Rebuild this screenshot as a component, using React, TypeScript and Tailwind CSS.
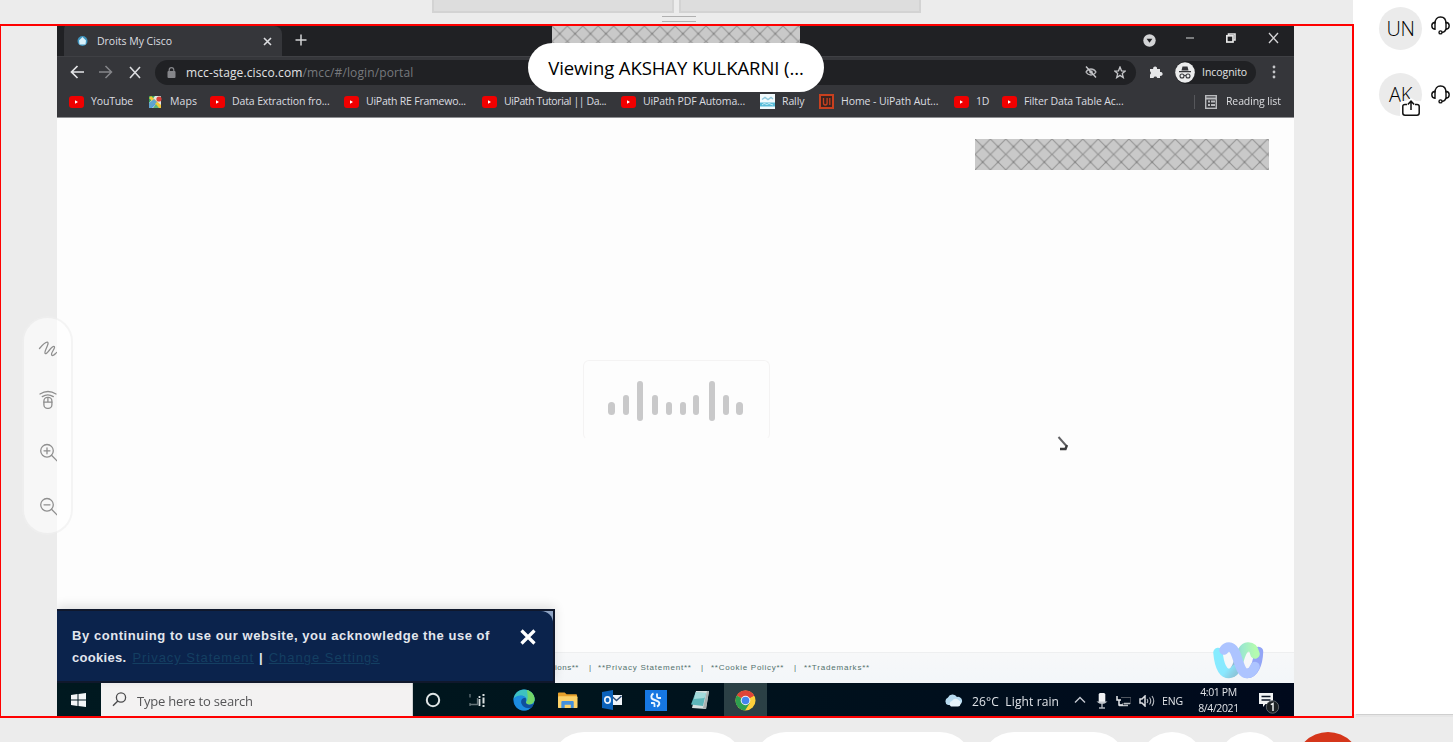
import React from "react";

const FONT = "font-['Open_Sans','Noto_Sans',sans-serif]";

function YouTubeIcon() {
  return (
    <svg className="h-3 w-[15px] shrink-0" viewBox="0 0 15 12">
      <rect width="15" height="12" rx="3" fill="#f00000" />
      <path d="M6 4.200 9 6 6 7.800z" fill="#fff" />
    </svg>
  );
}

function MapsIcon() {
  return (
    <svg className="h-3 w-[15px] shrink-0" viewBox="0 0 15 12">
      <rect x="1" width="12" height="12" rx="1" fill="#dfe6e4" />
      <path d="M1 0h6L1 7z" fill="#34a058" />
      <path d="M1 12V9l5-5 3 3-5 5z" fill="#4a8ff0" />
      <path d="M1 2l2-2 10 9v3h-2z" fill="#f4c93a" />
      <path d="M1 7l5-4 3 3-6 6H1z" fill="#5fa3d0" />
      <path d="M8 8l-3 4h6z" fill="#5fb277" />
      <circle cx="11" cy="3" r="2.6" fill="#d9403a" />
    </svg>
  );
}

function RallyIcon() {
  return (
    <svg className="h-[15px] w-[15px] shrink-0" viewBox="0 0 15 15">
      <rect width="15" height="15" fill="#f2fafc" />
      <path d="M2 5.500l3-2 3 2 3-2 2 1.500" stroke="#8fc9de" strokeWidth="1.500" fill="none" />
      <path d="M0 8.500h15v4H0z" fill="#58bcd8" />
      <path d="M2 11l2-1.500 3 1 2-1 4 1.500" stroke="#c8ecf5" fill="none" />
    </svg>
  );
}

function UiPathIcon() {
  return (
    <svg className="h-[15px] w-[15px] shrink-0" viewBox="0 0 15 15">
      <rect x="1" y="1" width="13" height="13" fill="#3a2420" stroke="#c8401f" strokeWidth="2" />
      <path d="M4.500 4v5q0 2 1.800 2t1.800-2V4M10.800 4v7" stroke="#c8401f" strokeWidth="1.300" fill="none" />
    </svg>
  );
}

const bookmarks = [
  { icon: "yt", label: "YouTube", slot: "w-[79px]", text: "tracking-[-0.15px]" },
  { icon: "maps", label: "Maps", slot: "w-[62px]", text: "tracking-[0.1px]" },
  { icon: "yt", label: "Data Extraction fro...", slot: "w-[134px]", text: "tracking-[-0.12px]" },
  { icon: "yt", label: "UiPath RE Framewo...", slot: "w-[138px]", text: "tracking-[-0.22px]" },
  { icon: "yt", label: "UiPath Tutorial || Da...", slot: "w-[139px]", text: "tracking-[-0.4px]" },
  { icon: "yt", label: "UiPath PDF Automa...", slot: "w-[139px]", text: "tracking-[-0.12px]" },
  { icon: "rally", label: "Rally", slot: "w-[59px]", text: "tracking-[-0.1px]" },
  { icon: "uipath", label: "Home - UiPath Aut...", slot: "w-[135px]", text: "tracking-[-0.08px]" },
  { icon: "yt", label: "1D", slot: "w-[48px]", text: "tracking-[-0.3px]" },
  { icon: "yt", label: "Filter Data Table Ac...", slot: "w-[192px]", text: "tracking-[-0.12px]" },
];

function BookmarkIcon({ kind }: { kind: string }) {
  if (kind === "maps") return <MapsIcon />;
  if (kind === "rally") return <RallyIcon />;
  if (kind === "uipath") return <UiPathIcon />;
  return <YouTubeIcon />;
}

function Hatch({ id, className }: { id: string; className: string }) {
  return (
    <svg className={className}>
      <defs>
        <pattern id={id} width="15.400" height="15.400" patternUnits="userSpaceOnUse">
          <rect width="15.400" height="15.400" fill="#c9c9c9" />
          <path d="M0 0 15.400 15.400M15.400 0 0 15.400" stroke="#959595" strokeWidth="1.150" />
          <circle cx="7.700" cy="7.700" r="1.200" fill="#8a8a8a" />
        </pattern>
      </defs>
      <rect width="100%" height="100%" fill={`url(#${id})`} />
    </svg>
  );
}

function TabStrip() {
  return (
    <div className="flex h-[30px] bg-[#202124]">
      <div className="flex h-[30px] w-[225px] items-center rounded-t-lg border-l-[7px] border-[#202124] bg-[#35363a] pl-[12px]">
        <svg className="h-3 w-3" viewBox="0 0 12 12">
          <circle cx="6.500" cy="6" r="5" fill="#3e93bd" />
          <path d="M3 5.500 6.500 2 10 5.500 9.500 9.500h-6z" fill="#d9f1fb" />
        </svg>
        <span className="ml-[9px] text-[10.5px] leading-none tracking-[-0.02px] whitespace-nowrap text-[#dedfe1]">
          Droits My Cisco
        </span>
        <svg className="mr-[10px] ml-auto h-[9px] w-[9px]" viewBox="0 0 9 9">
          <path d="M1 1l7 7M8 1 1 8" stroke="#dcdde0" strokeWidth="1.600" />
        </svg>
      </div>
      <svg className="mt-[8px] ml-[13px] h-3 w-3" viewBox="0 0 12 12">
        <path d="M6 .500v11M.500 6h11" stroke="#d2d3d5" strokeWidth="1.500" />
      </svg>
      <Hatch id="hatch-top" className="ml-[245px] h-[30px] w-[248px]" />
      <svg className="mt-2 ml-[343px] h-[13px] w-[13px]" viewBox="0 0 13 13">
        <circle cx="6.500" cy="6.500" r="6.200" fill="#d3d4d6" />
        <path d="M3.600 4.800h5.800L6.500 8.800z" fill="#202124" />
      </svg>
      <svg className="mt-[7px] ml-[29px] h-3 w-2.5" viewBox="0 0 10 12">
        <path d="M1 5h8" stroke="#b8b9bb" strokeWidth="1.200" />
      </svg>
      <svg className="mt-[7px] ml-[31px] h-2.5 w-2.5" viewBox="0 0 10 10">
        <path d="M2.500 2.500V1H9v6H7.500" stroke="#e6e6e6" strokeWidth="1.600" fill="none" />
        <rect x="0.800" y="2.800" width="6.200" height="6.200" stroke="#e6e6e6" strokeWidth="1.700" fill="none" />
      </svg>
      <svg className="mt-[6px] ml-[32px] h-3 w-[11px]" viewBox="0 0 11 12">
        <path d="M1 1l9 10M10 1 1 11" stroke="#d4d4d6" strokeWidth="1.300" />
      </svg>
    </div>
  );
}

function AddressRow() {
  return (
    <div className="flex h-[31px] items-center border-t border-[#3f4044] bg-[#35363a]">
      <svg className="ml-[13px] h-[14px] w-[14px]" viewBox="0 0 14 14">
        <path d="M14 7H1.500M7.500 1 1.500 7l6 6" stroke="#e4e5e7" strokeWidth="1.700" fill="none" />
      </svg>
      <svg className="ml-[15px] h-[14px] w-[14px]" viewBox="0 0 14 14">
        <path d="M0 7h12.500M6.500 1l6 6-6 6" stroke="#85868a" strokeWidth="1.500" fill="none" />
      </svg>
      <svg className="ml-[16px] h-[13px] w-3" viewBox="0 0 12 13">
        <path d="M1 1l10 11M11 1 1 12" stroke="#dcdde0" strokeWidth="1.600" />
      </svg>
      <div className="ml-[14px] flex h-[25px] w-[981px] items-center rounded-full bg-[#202124] pl-[12px]">
        <svg className="h-[11px] w-[9px]" viewBox="0 0 9 11">
          <path d="M2.200 5V3a2.300 2.300 0 0 1 4.600 0v2" stroke="#85868a" strokeWidth="1.200" fill="none" />
          <rect x="0.500" y="4" width="8" height="7" rx="1" fill="#85868a" />
        </svg>
        <span className="ml-[10px] pt-px text-[12px] leading-none tracking-[0.12px] whitespace-nowrap text-[#e2e3e5]">
          mcc-stage.cisco.com<span className="text-[#77797d]">/mcc/#/login/portal</span>
        </span>
        <svg className="ml-auto h-3 w-3" viewBox="0 0 12 12">
          <path d="M1 6q2-3 5-3t5 3q-2 3-5 3T1 6z" stroke="#b8b9bc" strokeWidth="1.300" fill="none" />
          <circle cx="6" cy="6" r="1.800" fill="#b8b9bc" />
          <path d="M1 0.500 11 11.500" stroke="#c8c9cc" strokeWidth="1.400" />
        </svg>
        <svg className="mr-[10px] ml-[17px] h-[13px] w-3" viewBox="0 0 12 13">
          <path d="M6 1l1.500 3.800 3.800.2-3 2.600 1 4L6 9.400 2.700 11.600l1-4-3-2.600 3.800-.2z" stroke="#c6c7ca" strokeWidth="1.300" fill="none" />
        </svg>
      </div>
      <svg className="ml-[13px] h-[14px] w-[14px]" viewBox="0 0 14 14">
        <path d="M1 4h3.200a2 2 0 1 1 3.800 0h3v3a2 2 0 1 1 0 3.800V13H8.200a1.900 1.900 0 0 0-3.700 0H1v-3.500a1.900 1.900 0 0 0 0-3.200z" fill="#e6e7e9" />
      </svg>
      <div className="ml-[12px] flex h-[23px] w-[81px] items-center rounded-full bg-[#202124]">
        <svg className="h-[21px] w-5 shrink-0" viewBox="0 0 20 21">
          <ellipse cx="10" cy="10.500" rx="9.800" ry="10.300" fill="#eceded" />
          <path d="M6.500 8.500 7.500 4.500h5l1 4zM4 9h12v1.300H4z" fill="#35363a" />
          <circle cx="7" cy="14" r="2" stroke="#35363a" strokeWidth="1.100" fill="none" />
          <circle cx="13" cy="14" r="2" stroke="#35363a" strokeWidth="1.100" fill="none" />
          <path d="M9 13.600q1-.8 2 0" stroke="#35363a" fill="none" />
        </svg>
        <span className="ml-[7px] text-[10.5px] leading-none tracking-[-0.05px] text-[#e0e1e3]">Incognito</span>
      </div>
      <svg className="ml-[16px] h-[14px] w-1" viewBox="0 0 4 14">
        <circle cx="2" cy="2" r="1.400" fill="#c4c5c8" />
        <circle cx="2" cy="7" r="1.400" fill="#c4c5c8" />
        <circle cx="2" cy="12" r="1.400" fill="#c4c5c8" />
      </svg>
    </div>
  );
}

function BookmarksRow() {
  return (
    <div className="flex h-[31px] items-center border-b border-[#8e8f92] bg-[#35363a] pb-px pl-[12px]">
      {bookmarks.map((b) => (
        <div key={b.label} className={`flex shrink-0 items-center ${b.slot}`}>
          <BookmarkIcon kind={b.icon} />
          <span className={`ml-[7px] text-[10.5px] leading-none whitespace-nowrap text-[#dcdde0] ${b.text}`}>
            {b.label}
          </span>
        </div>
      ))}
      <div className="h-[14px] w-px bg-[#56575b]" />
      <svg className="ml-[10px] h-[14px] w-3" viewBox="0 0 12 14">
        <rect x="0.700" y="0.700" width="10.600" height="12.600" stroke="#b9babd" strokeWidth="1.400" fill="none" />
        <path d="M1 3.500h10M3 6.500h2M3 10h2M6 6.500h4M6 10h4" stroke="#b9babd" strokeWidth="1.800" />
      </svg>
      <span className="ml-[9px] text-[10.5px] leading-none tracking-[-0.12px] whitespace-nowrap text-[#dcdde0]">Reading list</span>
    </div>
  );
}

const bars = [
  { m: "ml-0", h: "h-[13px]", t: "mt-[21px]", w: "w-[7px]" },
  { m: "ml-2", h: "h-[20px]", t: "mt-[14px]", w: "w-[6px]" },
  { m: "ml-2", h: "h-[40px]", t: "mt-0", w: "w-[6px]" },
  { m: "ml-[9px]", h: "h-[20px]", t: "mt-[14px]", w: "w-[6px]" },
  { m: "ml-[8px]", h: "h-[13px]", t: "mt-[21px]", w: "w-[6px]" },
  { m: "ml-2", h: "h-[13px]", t: "mt-[21px]", w: "w-[6px]" },
  { m: "ml-[7px]", h: "h-[20px]", t: "mt-[14px]", w: "w-[6px]" },
  { m: "ml-[10px]", h: "h-[40px]", t: "mt-0", w: "w-[6px]" },
  { m: "ml-2", h: "h-[20px]", t: "mt-[14px]", w: "w-[6px]" },
  { m: "ml-[7px]", h: "h-[13px]", t: "mt-[21px]", w: "w-[7px]" },
];

function WebexMark() {
  return (
    <svg className="h-[37px] w-[51px]" viewBox="0 0 51 37">
      <defs>
        <linearGradient id="wx-c" x1="0" y1="0" x2="1" y2="1">
          <stop offset="0" stopColor="#86ecff" />
          <stop offset=".65" stopColor="#8ae8ff" />
          <stop offset="1" stopColor="#8cc8dc" />
        </linearGradient>
        <linearGradient id="wx-g" x1="0" y1="0" x2="1" y2="0">
          <stop offset="0" stopColor="#8fb7d4" />
          <stop offset=".4" stopColor="#9be8cf" />
          <stop offset="1" stopColor="#b4fbb0" />
        </linearGradient>
      </defs>
      <path d="M45.500 9.500C45 22 41 31.500 34 31.500" stroke="#93a5f6" strokeWidth="9.500" strokeLinecap="round" fill="none" />
      <path d="M20 30C27 25 26 5.500 35 5c4.500-.2 6 2.500 7 7" stroke="url(#wx-g)" strokeWidth="9.500" strokeLinecap="round" fill="none" />
      <path d="M5 10.500C6 22 9.500 31.500 16 31.500c3 0 5-2 6.500-4" stroke="url(#wx-c)" strokeWidth="9.500" strokeLinecap="round" fill="none" />
      <path d="M11 8C12.500 5.800 14 5 16 5c9.500 0 8.500 26.500 18 26.500 4 0 6-2.500 8-7" stroke="#adc4ff" strokeWidth="9.500" strokeLinecap="round" fill="none" />
    </svg>
  );
}

function PageBody() {
  return (
    <div className="relative flex h-[565px] flex-col bg-[#fdfdfd]">
      <Hatch id="hatch-page" className="mt-[21px] mr-[25px] h-[31px] w-[294px] self-end" />
      <div className="mt-[190px] ml-[526px] flex h-[80px] w-[187px] rounded-md border border-b-transparent border-[#f4f3f3] pt-[20px] pl-[24px]">
        {bars.map((b, i) => (
          <div key={i} className={`shrink-0 rounded-full bg-[#c9c9ca] ${b.m} ${b.h} ${b.t} ${b.w}`} />
        ))}
      </div>
      <svg className="mt-[-4px] ml-[1000px] h-4 w-3" viewBox="0 0 12 16">
        <path d="M1.500 1 9 9.500" stroke="#606063" strokeWidth="1.900" fill="none" />
        <path d="M10 9 8.500 13H3" stroke="#3c3c3e" strokeWidth="2.400" fill="none" />
      </svg>
      <div className="mt-auto flex h-[31px] items-center border-t border-[#eeeff0] bg-gradient-to-b from-[#f7f8f9] to-[#f3f6f9] pl-[498px] font-['Liberation_Sans',Arial,sans-serif] text-[8px] leading-none whitespace-nowrap text-[#52716c]">
        <span className="w-[34px] tracking-[0.5px]">ions**</span>
        <span className="w-[9px]">|</span>
        <span className="w-[103px] tracking-[0.78px]">**Privacy Statement**</span>
        <span className="w-[10px]">|</span>
        <span className="w-[83px] tracking-[0.72px]">**Cookie Policy**</span>
        <span className="w-[10px]">|</span>
        <span className="tracking-[0.8px]">**Trademarks**</span>
      </div>
      <div className="absolute bottom-0 left-0 h-[74px] w-[498px] border-t-2 border-r-2 border-b-2 border-[#10182c] bg-[#8fa4c4] shadow-[0_-3px_10px_rgba(0,0,0,0.12)]">
        <div className="flex h-full w-full rounded-tr-[12px] bg-[#0b234c] pt-[14px] pl-[15px] font-['Liberation_Sans',Arial,sans-serif] text-[13px] leading-[22px] font-bold text-[#e2e6ee]">
          <div className="w-[448px] whitespace-nowrap">
            <div className="tracking-[0.55px]">By continuing to use our website, you acknowledge the use of</div>
            <div className="flex">
              <span className="tracking-[0.3px]">cookies.</span>
              <span className="ml-[6px] font-normal tracking-[0.95px] text-[#143f62] underline">Privacy Statement</span>
              <span className="ml-[5px]">|</span>
              <span className="ml-[6px] font-normal tracking-[1px] text-[#143f62] underline">Change Settings</span>
            </div>
          </div>
          <svg className="mt-[4px] ml-0 h-4 w-4" viewBox="0 0 16 16">
            <path d="M1.500 1.500l13 13M14.500 1.500l-13 13" stroke="#fff" strokeWidth="3.200" />
          </svg>
        </div>
      </div>
    </div>
  );
}

function EdgeIcon() {
  return (
    <svg className="h-[22px] w-[22px]" viewBox="0 0 22 22">
      <circle cx="11" cy="11" r="10.600" fill="#1674c8" />
      <path d="M.6 10C1.500 4 6 .4 11 .4c6 0 10.600 4.500 10.600 9.600 0 4-3 5.500-6 5.500-2 0-3.500-1-2.500-2.500C15 9 11 6.500 8 6.800 4 7 1.500 9 .6 10z" fill="#3ec2c0" />
      <path d="M14 .9c4.500 1.300 7.600 5 7.600 9 0 4-3 5.600-6 5.600-2 0-3.300-1-2.400-2.400C16 9 14 5 14 .9z" fill="#72d668" />
      <path d="M.6 10C3 6 10 5 12.500 9c-3-.5-5 2-4 5.500 1 3.500 5 5.500 9.500 4.500-5 4.500-14 3-16.500-4z" fill="#1c8ce0" />
      <path d="M12.500 9c-3-.5-5 2-4 5.500.9 3 4.500 5.300 9.500 4.300 2-1 2.500-3 1.800-3.800-2 1.200-5 .8-6.400-.6-1.200-1.500.1-3.200-.9-5.400z" fill="#0f4f9c" />
    </svg>
  );
}

function Taskbar() {
  return (
    <div className="flex h-[33px] items-center bg-gradient-to-r from-[#001920] via-[#00151d] via-40% to-[#00091c]">
      <div className="flex h-full w-[44px] items-center pt-px pl-[14px]">
        <svg className="h-[14px] w-[15px]" viewBox="0 0 15 14">
          <path d="M0 2 6.500 1v5.500H0zM7.500.9 15 0v6.500H7.500zM0 7.500h6.500V13L0 12zM7.500 7.500H15V14l-7.500-.9z" fill="#f2f6f7" />
        </svg>
      </div>
      <div className="flex h-full w-[312px] items-center border-r border-[#cfd1d2] bg-[#f3f2f2] pl-[11px]">
        <svg className="h-[15px] w-[15px]" viewBox="0 0 15 15">
          <circle cx="9" cy="5.500" r="4.600" stroke="#4b4b4d" strokeWidth="1.300" fill="none" />
          <path d="M5.800 9 1 13.800" stroke="#4b4b4d" strokeWidth="1.400" />
        </svg>
        <span className="ml-[10px] pt-1 text-[13px] leading-none tracking-[-0.2px] whitespace-nowrap text-[#555557]">Type here to search</span>
      </div>
      <svg className="mt-px ml-[12px] h-4 w-4" viewBox="0 0 16 16">
        <circle cx="8" cy="8" r="6.200" stroke="#dfe5e6" strokeWidth="2" fill="none" />
      </svg>
      <svg className="mt-px ml-[28px] h-[15px] w-4" viewBox="0 0 16 15">
        <path d="M1 4.500V1M1 13v-3M1 11.500h8M8.500 5v6.500" stroke="#66757a" strokeWidth="1.300" fill="none" />
        <path d="M10.500 3v10" stroke="#d9dfe0" strokeWidth="1.800" strokeDasharray="2 1 7 0" />
        <path d="M14.500 1v13" stroke="#d9dfe0" strokeWidth="2" strokeDasharray="2 1.500 6 1.500" />
      </svg>
      <div className="mt-px ml-[28px]"><EdgeIcon /></div>
      <svg className="mt-px ml-[23px] h-[17px] w-[20px]" viewBox="0 0 21 17">
        <path d="M0 1q0-1 1-1h6l2 2h10q1 0 1 1v3H0z" fill="#e5a12c" />
        <rect y="4" width="20.500" height="12.500" rx="1" fill="#fbd269" />
        <path d="M3.500 16.500V10q0-1 1-1h11q1 0 1 1v6.500h-3V13H7v3.500z" fill="#4390dd" />
      </svg>
      <svg className="mt-px ml-[24px] h-[20px] w-5" viewBox="0 0 20 20">
        <rect x="9" y="5" width="11" height="10" fill="#f0f4f9" />
        <path d="M9.500 6l5 4.500L19.500 6" stroke="#2b4b73" strokeWidth="1.400" fill="none" />
        <path d="M0 2 11 0v20L0 18z" fill="#0b62ba" />
        <ellipse cx="5.500" cy="10" rx="2.700" ry="3.200" stroke="#e9f1fb" strokeWidth="1.700" fill="none" />
      </svg>
      <svg className="mt-px ml-[23px] h-[21px] w-[22px]" viewBox="0 0 22 21">
        <rect width="22" height="21" fill="#1677e2" />
        <path d="M8.500 3.500C6 4.500 5.500 8 8 9.300l5 2c2 1 1.800 4-1 5.200" stroke="#e9f5ff" strokeWidth="2" fill="none" />
        <path d="M12 3.500v3q0 1.500 1.500 1.500H16M6 13h2.500q1 0 1 1.200V17" stroke="#e9f5ff" strokeWidth="1.800" fill="none" />
      </svg>
      <svg className="mt-px ml-[23px] h-5 w-[20px]" viewBox="0 0 20 20">
        <path d="M6 1l13 0-3 18-14-1z" fill="#d6dfdf" />
        <path d="M5.500 2.500 16 3l-3 13L1 14.500z" fill="#5db5b9" />
        <path d="M5.500 2.500 16 3l-1.500 5L4 9z" fill="#a3dadb" />
        <path d="M19 1l-3 18-3-1L17 1z" fill="#a9b0b0" />
      </svg>
      <div className="ml-[14px] flex h-full w-[43px] items-center justify-center bg-[#2b4045] pt-px">
        <svg className="h-[21px] w-[21px]" viewBox="0 0 22 22">
          <circle cx="11" cy="11" r="10.500" fill="#fdd03b" />
          <path d="M11 11 1.900 5.700A10.500 10.500 0 0 1 20.100 5.700z" fill="#df4538" />
          <path d="M20.100 5.700H11v5z" fill="#df4538" />
          <path d="M1.900 5.750A10.500 10.500 0 0 0 10.500 21.500L15.500 13.500 11 11z" fill="#2ea04f" />
          <circle cx="11" cy="11" r="5" fill="#f4f4f4" />
          <circle cx="11" cy="11" r="4" fill="#4384ee" />
        </svg>
      </div>
      <svg className="mt-px ml-[177px] h-[13px] w-[19px]" viewBox="0 0 19 12">
        <path d="M4 10.500a4 4 0 0 1 0-7.500 5 5 0 0 1 9-.5 4 4 0 0 1 2 8z" fill="#b7dbf0" />
        <path d="M7 12a3 3 0 0 1 1-5.500 4 4 0 0 1 6.500-1A3.400 3.400 0 0 1 14 12z" fill="#e6f2f9" />
      </svg>
      <span className="ml-[9px] w-[102px] pt-1 text-[12px] leading-none tracking-[0.12px] whitespace-nowrap text-[#dfe3e8]">26°C&nbsp; Light rain</span>
      <svg className="mt-px h-2 w-3" viewBox="0 0 12 8">
        <path d="M1 6.500 6 1.500l5 5" stroke="#c5cad2" strokeWidth="1.400" fill="none" />
      </svg>
      <svg className="mt-[3px] ml-[10px] h-4 w-3" viewBox="0 0 12 16">
        <rect x="2.700" width="6.600" height="10" rx="1.500" fill="#f0f2f4" />
        <path d="M.5 8.500q5.500 5 11 0z" fill="#c3c8ce" />
        <path d="M6 11v4M3 15h6" stroke="#aeb4bc" strokeWidth="1.400" fill="none" />
      </svg>
      <svg className="mt-[3px] ml-[8px] h-3 w-[15px]" viewBox="0 0 15 12">
        <path d="M5 2.500h10v6H6" stroke="#50565f" strokeWidth="1.200" fill="none" />
        <path d="M3 10.500h9M8 8.500h6" stroke="#b5bac0" strokeWidth="1.500" fill="none" />
        <path d="M1 1v4h4M3 5v5h4" stroke="#e6e8eb" strokeWidth="1.500" fill="none" />
      </svg>
      <svg className="mt-[3px] ml-[8px] h-3 w-4" viewBox="0 0 16 12">
        <path d="M1 4h2l3-3v10L3 8H1z" stroke="#dadde1" strokeWidth="1.500" fill="none" />
        <path d="M8 4q1.500 2 0 4M10.500 2.500q2.500 3.500 0 7M13 1q3.500 5 0 10" stroke="#b5bac1" strokeWidth="1.100" fill="none" />
      </svg>
      <span className="mt-[3px] ml-[7px] w-[35px] text-[10.5px] leading-none tracking-[-0.1px] text-[#e1e4e8]">ENG</span>
      <div className="flex w-[43px] flex-col items-center text-[10.5px] leading-[16px] tracking-[-0.4px] whitespace-nowrap text-[#e1e4e8]">
        <span>4:01 PM</span>
        <span>8/4/2021</span>
      </div>
      <svg className="mt-[7px] ml-[18px] h-[23px] w-[22px]" viewBox="0 0 22 23">
        <path d="M1 1h14v11H7.500L5 15v-3H1z" fill="#f1f3f5" />
        <path d="M3.500 4.500h9M3.500 8h9" stroke="#0a1526" strokeWidth="1.500" />
        <circle cx="14.500" cy="15" r="6.200" fill="#1b2024" stroke="#5c6268" />
        <path d="M12.800 12.700 15 11.500V19" stroke="#e8eaec" strokeWidth="1.500" fill="none" />
      </svg>
    </div>
  );
}

function SideTools() {
  return (
    <div className="absolute top-[290px] left-[21px] flex h-[219px] w-[51px] flex-col items-start rounded-[26px] border-2 border-black/4 bg-white/60 pl-[13px] text-[#8f8f8f]">
      <div className="flex w-[20px] flex-col overflow-hidden">
        <svg className="mt-[21px] h-[20px] w-[22px]" viewBox="0 0 22 20" fill="none" stroke="currentColor" strokeWidth="1.300" strokeLinecap="round" strokeLinejoin="round">
          <path d="M2.500 9.500C5 6.500 8.500 3 10.200 3.200c3.300.5-4 9.800-2 11.300 2 1.500 6.500-8.500 9-7 2 1.300-4 6.500-2.500 8.500 1.200 1.500 3.200-1 5-2.500" />
        </svg>
        <svg className="mt-[30px] h-[22px] w-[22px]" viewBox="0 0 22 22" fill="none" stroke="currentColor" strokeWidth="1.300" strokeLinecap="round">
          <path d="M3 5q8-5 16 0M5.300 7.600q5.500-3.600 11 0" />
          <rect x="6.900" y="8.300" width="8" height="11" rx="3.600" />
          <path d="M6.900 13.200h8M10.900 8.600v4.600" />
        </svg>
        <svg className="mt-[30px] h-[22px] w-[22px]" viewBox="0 0 22 22" fill="none" stroke="currentColor" strokeWidth="1.300" strokeLinecap="round">
          <circle cx="10" cy="9.800" r="6.300" />
          <path d="m14.500 14.300 5.500 5.500M7 9.800h6M10 6.800v6" />
        </svg>
        <svg className="mt-[32px] h-[22px] w-[22px]" viewBox="0 0 22 22" fill="none" stroke="currentColor" strokeWidth="1.300" strokeLinecap="round">
          <circle cx="10" cy="9.800" r="6.300" />
          <path d="m14.500 14.300 5.500 5.500M7 9.800h6" />
        </svg>
      </div>
    </div>
  );
}

function Headset({ offset }: { offset: string }) {
  return (
    <svg className={`ml-[9px] h-[19px] w-[19px] shrink-0 ${offset}`} viewBox="0 0 19 19" fill="none" stroke="#111" strokeWidth="1.400">
      <path d="M4 7.500C4 3.500 6.200 1 9.500 1S15 3.500 15 7.500" />
      <path d="M4 6.200v7C2 13 .8 11.500 .8 9.700S2 6.500 4 6.200zM15 6.200v7c2-.2 3.200-1.700 3.200-3.500S17 6.500 15 6.200z" />
      <path d="M15 13c-.5 2-2 3.200-4 3.400" />
      <circle cx="9.500" cy="16.400" r="1.500" />
    </svg>
  );
}

function Participant({ initials, sharing }: { initials: string; sharing?: boolean }) {
  return (
    <div className="flex h-[66px] pl-[26px]">
      <div className="relative flex h-[43px] w-[43px] shrink-0 items-center justify-center rounded-full bg-[#ebebeb] text-[20px] font-light tracking-[-0.3px] text-black">
        {initials}
        {sharing && (
          <svg className="absolute top-[25px] left-[21px] h-[22px] w-[22px]" viewBox="0 0 22 22">
            <path d="M0 5q0-2 2-2h4l5-3 5 3h4q2 0 2 2v14H0z" fill="#fff" />
            <path d="M7 6.500H5q-2.200 0-2.200 2V15q0 2.200 2.200 2.200h12q2.200 0 2.200-2.200V8.500q0-2-2.200-2h-2" fill="none" stroke="#111" strokeWidth="1.500" />
            <path d="M11 12V3.500M7.800 6.500 11 3.200l3.200 3.300" fill="none" stroke="#111" strokeWidth="1.500" />
          </svg>
        )}
      </div>
      <Headset offset={offsetFor(sharing)} />
    </div>
  );
}

function offsetFor(sharing?: boolean) {
  return sharing ? "mt-[12px]" : "mt-[9px]";
}

export default function App() {
  return (
    <div className={`flex h-[742px] w-[1453px] flex-col overflow-hidden bg-[#ececec] ${FONT}`}>
      <div className="flex h-[718px] shrink-0">
        <main className="flex w-[1354px] shrink-0 flex-col">
          <div className="flex h-6 shrink-0 flex-col items-center">
            <div className="flex h-[13px] w-full justify-center gap-[5px] pr-px">
              <div className="w-[242px] border-2 border-t-0 border-[#d3d3d3] bg-[#dddddd]" />
              <div className="w-[242px] border-2 border-t-0 border-[#d3d3d3] bg-[#dddddd]" />
            </div>
            <div className="mt-[3px] ml-[3px] h-[6px] w-[34px] border-y border-[#b0b0b0]" />
          </div>
          <section className="relative flex h-[694px] border-2 border-l border-[#ff0000] pl-[56px]">
            <div className="w-[1237px] overflow-hidden">
              <div className="flex flex-col blur-[0.6px]">
                <TabStrip />
                <AddressRow />
                <BookmarksRow />
                <PageBody />
                <Taskbar />
              </div>
            </div>
            <div className="absolute top-[616px] left-[1212px]">
              <WebexMark />
            </div>
            <div className="absolute top-[17px] left-[527px] flex h-[49px] w-[296px] items-center justify-center rounded-full bg-white pt-px text-[18.5px] tracking-[-0.08px] whitespace-nowrap text-black">
              Viewing AKSHAY KULKARNI (...
            </div>
            <SideTools />
          </section>
        </main>
        <aside className="-ml-px flex flex-1 flex-col">
          <div className="flex h-[714px] flex-col bg-white pt-[7px]">
            <Participant initials="UN" />
            <Participant initials="AK" sharing />
          </div>
          <div className="ml-[3px] h-[3px] border-t border-[#cfcfcf] bg-[#e6e6e6]" />
        </aside>
      </div>
      <footer className="flex pt-[14px] pl-[551px]">
        <div className="h-[66px] w-[193px] shrink-0 rounded-full bg-white" />
        <div className="ml-[9px] h-[66px] w-[220px] shrink-0 rounded-full bg-white" />
        <div className="ml-[8px] h-[66px] w-[146px] shrink-0 rounded-full bg-white" />
        <div className="ml-[12px] h-[66px] w-[66px] shrink-0 rounded-full bg-white" />
        <div className="ml-[12px] h-[66px] w-[66px] shrink-0 rounded-full bg-white" />
        <div className="ml-[12px] h-[66px] w-[66px] shrink-0 rounded-full bg-[#d5361b]" />
      </footer>
    </div>
  );
}
